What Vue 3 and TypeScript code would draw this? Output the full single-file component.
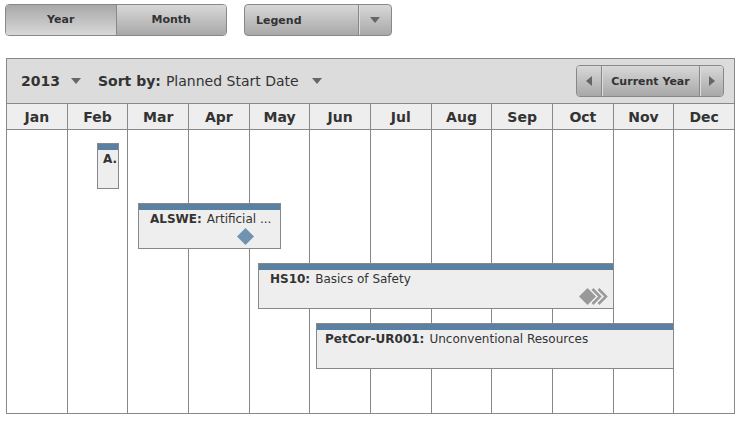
<script setup lang="ts">
import { ref } from 'vue'

interface Course {
  code: string
  title: string
  start: number
  span: number
  inset: 'narrow' | 'medium' | 'wide'
  marker?: 'milestone' | 'continues'
}

const months = ['Jan', 'Feb', 'Mar', 'Apr', 'May', 'Jun', 'Jul', 'Aug', 'Sep', 'Oct', 'Nov', 'Dec']

// start and span are measured in months from the beginning of the year
const courses: Course[] = [
  { code: 'A.', title: '', start: 1.486, span: 0.363, inset: 'narrow' },
  { code: 'ALSWE:', title: 'Artificial ...', start: 2.162, span: 2.36, inset: 'wide', marker: 'milestone' },
  { code: 'HS10:', title: 'Basics of Safety', start: 4.143, span: 5.876, inset: 'wide', marker: 'continues' },
  { code: 'PetCor-UR001:', title: 'Unconventional Resources', start: 5.1, span: 5.909, inset: 'medium' },
]

const view = ref<'Year' | 'Month'>('Year')
const year = ref('2013')
const sort = ref('Planned Start Date')

const barStyle = (c: Course) => ({
  marginLeft: `${(c.start / 12) * 100}%`,
  width: `${(c.span / 12) * 100}%`,
})

const step = (n: number) => {
  year.value = String(Math.min(2014, Math.max(2012, Number(year.value) + n)))
}
</script>

<template>
  <main class="page">
    <div class="toolbar">
      <div class="group views">
        <button type="button" :class="{ active: view === 'Year' }" @click="view = 'Year'">Year</button>
        <button type="button" :class="{ active: view === 'Month' }" @click="view = 'Month'">Month</button>
      </div>
      <button type="button" class="group legend" aria-haspopup="true">
        <span class="legend-text">Legend</span>
        <span class="legend-arrow">
          <svg width="10" height="6" viewBox="0 0 10 6"><path d="M0 0H10L5 6Z" /></svg>
        </span>
      </button>
    </div>

    <section class="calendar">
      <header class="controls">
        <div class="picker year">
          <select v-model="year" aria-label="Year">
            <option>2012</option>
            <option>2013</option>
            <option>2014</option>
          </select>
          <svg width="10" height="6" viewBox="0 0 10 6"><path d="M0 0H10L5 6Z" /></svg>
        </div>
        <div class="picker sort">
          <label for="sort">Sort by:</label>
          <select id="sort" v-model="sort">
            <option>Planned Start Date</option>
            <option>Title</option>
          </select>
          <svg width="10" height="6" viewBox="0 0 10 6"><path d="M0 0H10L5 6Z" /></svg>
        </div>
        <div class="group pager">
          <button type="button" class="arrow" aria-label="Previous year" @click="step(-1)">
            <svg width="6" height="10" viewBox="0 0 6 10"><path d="M6 0V10L0 5Z" /></svg>
          </button>
          <button type="button" class="current" @click="year = '2013'">Current Year</button>
          <button type="button" class="arrow" aria-label="Next year" @click="step(1)">
            <svg width="6" height="10" viewBox="0 0 6 10"><path d="M0 0V10L6 5Z" /></svg>
          </button>
        </div>
      </header>

      <div class="months">
        <div v-for="m in months" :key="m" class="month">{{ m }}</div>
      </div>

      <div class="chart">
        <div class="lines" aria-hidden="true">
          <div v-for="m in months" :key="m" class="line"></div>
        </div>
        <div class="bars">
          <article v-for="c in courses" :key="c.code" class="bar" :style="barStyle(c)">
            <div class="name" :class="c.inset">
              <strong>{{ c.code }}</strong>
              <span v-if="c.title">{{ c.title }}</span>
            </div>
            <svg v-if="c.marker === 'milestone'" class="milestone" width="17" height="17" viewBox="0 0 17 17">
              <path d="M8.500 0L17 8.500L8.500 17L0 8.500Z" />
            </svg>
            <svg v-if="c.marker === 'continues'" class="continues" width="29" height="17" viewBox="0 0 29 17">
              <path d="M8.500 0L17 8.500L8.500 17L0 8.500Z" />
              <path class="chevron" d="M13.500 1L21 8.500L13.500 16M19.500 1L27 8.500L19.500 16" />
            </svg>
          </article>
        </div>
      </div>
    </section>
  </main>
</template>

<style>
body {
  background: #fff;
}
</style>

<style scoped>
.page {
  padding: 4px 7px 7px 5px;
  color: #333;
  font-family: Verdana, "DejaVu Sans", sans-serif;
  font-size: 13px;
}

.page * {
  box-sizing: border-box;
}

svg {
  display: block;
  flex: none;
  fill: #666;
}

button,
select {
  margin: 0;
  padding: 0;
  border: 0;
  color: inherit;
  font-family: inherit;
}

button {
  background: linear-gradient(#d8d8d8, #a8a8a8);
  font-size: 11px;
  font-weight: bold;
}

.toolbar {
  display: flex;
  gap: 17px;
}

.group {
  display: flex;
  height: 32px;
  border: 1px solid #888;
  border-radius: 4px;
  overflow: hidden;
}

.views {
  width: 222px;
}

.views button {
  flex: 1;
  padding-bottom: 2px;
}

.views button:first-child {
  border-right: 1px solid #888;
}

.views .active {
  background: linear-gradient(#a8a8a8, #d8d8d8);
}

.legend {
  width: 148px;
  align-items: stretch;
}

.legend-text {
  flex: 1;
  align-self: center;
  padding-left: 11px;
  text-align: left;
}

.legend-arrow {
  display: flex;
  width: 33px;
  align-items: center;
  justify-content: center;
  border-left: 1px solid #888;
  box-shadow: inset 1px 0 #ddd;
}

.calendar {
  margin: 22px 0 0 1px;
  border: 1px solid #888;
}

.controls {
  display: flex;
  height: 45px;
  align-items: center;
  padding: 0 10px 0 14px;
  border-bottom: 1px solid #888;
  background: #dcdcdc;
}

.picker {
  display: flex;
  align-items: center;
}

.picker select {
  appearance: none;
  background: transparent;
  font-size: 14px;
}

.year select {
  margin-right: 11px;
  font-weight: bold;
}

.sort {
  margin-left: 17px;
  font-size: 14px;
}

.sort label {
  margin-right: 5px;
  font-weight: bold;
}

.sort select {
  margin-right: 13px;
}

.pager {
  width: 148px;
  margin-left: auto;
}

.pager .arrow {
  display: flex;
  width: 24px;
  align-items: center;
  justify-content: center;
}

.pager .current {
  flex: 1;
  white-space: nowrap;
}

.pager button + button {
  border-left: 1px solid #888;
  box-shadow: inset 1px 0 #ddd;
}

/* The last column's rule lies on the frame's right border */
.months,
.lines {
  display: grid;
  grid-template-columns: repeat(12, 1fr);
  margin-right: -1px;
}

.months {
  height: 26px;
  border-bottom: 1px solid #888;
  background: #eee;
}

.month,
.line {
  border-right: 1px solid #888;
}

.month {
  font-size: 14px;
  font-weight: bold;
  line-height: 26px;
  text-align: center;
}

.chart {
  display: grid;
  min-height: 283px;
}

.lines,
.bars {
  grid-area: 1 / 1;
}

.bars {
  display: flex;
  flex-direction: column;
  gap: 14px;
  padding: 13px 0;
}

.bar {
  display: flex;
  flex-direction: column;
  height: 46px;
  border: 1px solid #888;
  background: #eee;
}

.bar::before {
  content: "";
  flex: none;
  height: 6px;
  background: #5a80a2;
}

.name {
  display: flex;
  gap: 5px;
  overflow: hidden;
  font-size: 12px;
  line-height: 18px;
  white-space: nowrap;
}

.narrow {
  padding-left: 5px;
}

.medium {
  padding-left: 8px;
}

.wide {
  padding-left: 11px;
}

.milestone,
.continues {
  align-self: flex-end;
}

.milestone {
  margin-right: 26px;
  fill: #7093b2;
}

.continues {
  margin-right: 5px;
  fill: #999;
}

.chevron {
  fill: none;
  stroke: #999;
  stroke-width: 2.5;
}
</style>
